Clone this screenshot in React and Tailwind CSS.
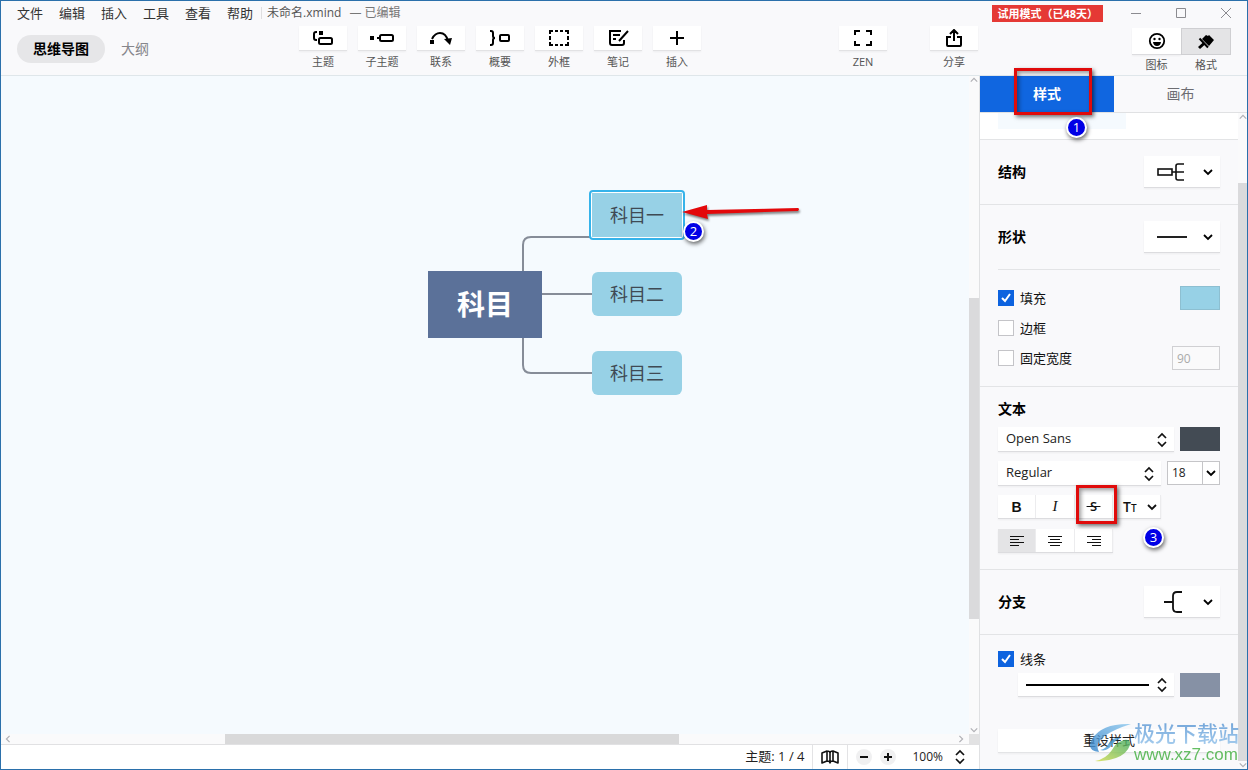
import { useState } from 'react';
import clsx from 'clsx';

const FONT = "font-['Open_Sans','Noto_Sans_CJK_SC',sans-serif]";
const MENUS = ['文件', '编辑', '插入', '工具', '查看', '帮助'];

function Glyph({ children }) {
  return (
    <svg width="24" height="16" viewBox="0 0 24 16" fill="none" stroke="#000" strokeWidth="2" aria-hidden="true">
      {children}
    </svg>
  );
}

const TOOLS = [
  {
    label: '主题',
    icon: (
      <Glyph>
        <path d="M6 2H5Q3 2 3 4v4q0 2 2 2h1" />
        <rect x="8" y="1" width="4" height="4" fill="#000" stroke="none" />
        <rect x="8" y="8" width="13" height="6" rx="1.5" />
      </Glyph>
    ),
  },
  {
    label: '子主题',
    icon: (
      <Glyph>
        <rect x="0" y="6" width="4" height="4" fill="#000" stroke="none" />
        <path d="M7 8h3" />
        <rect x="10" y="5" width="13" height="6" rx="1.5" />
      </Glyph>
    ),
  },
  {
    label: '联系',
    icon: (
      <Glyph>
        <rect x="1" y="10" width="4" height="4" fill="#000" stroke="none" />
        <path d="M3 9Q6 3 11 3q6 0 8 8" />
        <path d="M15 9l8-1-2 7z" fill="#000" stroke="none" />
      </Glyph>
    ),
  },
  {
    label: '概要',
    icon: (
      <Glyph>
        <path d="M2 1h1q2 0 2 2v3q0 2 2 2q-2 0-2 2v3q0 2-2 2H2" />
        <rect x="12" y="5" width="9" height="6" rx="1" />
      </Glyph>
    ),
  },
  {
    label: '外框',
    icon: (
      <Glyph>
        <path d="M3 4V1h3M18 1h3v3M21 12v3h-3M6 15H3v-3M8 1h3M13 1h3M8 15h3M13 15h3M3 6v4M21 6v4" />
      </Glyph>
    ),
  },
  {
    label: '笔记',
    icon: (
      <Glyph>
        <path d="M15 1H4v12q0 2 2 2h10q2 0 2-2v-3M7 5h7M7 9h3M22 1l-9 10" />
      </Glyph>
    ),
  },
  {
    label: '插入',
    icon: (
      <Glyph>
        <path d="M12 1v14M5 8h14" />
      </Glyph>
    ),
  },
];

function ToolButton({ label, children }) {
  return (
    <button type="button" className="flex w-12 flex-col items-center">
      <span className="flex h-[25px] w-full items-center justify-center border-b border-[#e2e2e4] bg-white shadow-xs">
        {children}
      </span>
      <span className="mt-[3px] text-[11px] leading-4 whitespace-nowrap text-[#555]">{label}</span>
    </button>
  );
}

function Chevron({ dir = 'down', thin, className }) {
  const d = {
    down: 'M1 3l4 4 4-4',
    up: 'M1 7l4-4 4 4',
    left: 'M7 1L3 5l4 4',
    right: 'M3 1l4 4-4 4',
  }[dir];
  return (
    <svg
      width={thin ? 8 : 10}
      height={thin ? 8 : 10}
      viewBox="0 0 10 10"
      fill="none"
      stroke="currentColor"
      strokeWidth={thin ? 1.5 : 1.8}
      className={clsx('shrink-0', className)}
      aria-hidden="true"
    >
      <path d={d} />
    </svg>
  );
}

function UpDown({ className }) {
  return (
    <svg width="10" height="16" viewBox="0 0 10 16" fill="none" stroke="#111" strokeWidth="1.7" className={className} aria-hidden="true">
      <path d="M1 6l4-4 4 4M1 10l4 4 4-4" />
    </svg>
  );
}

function Marker({ n, className }) {
  return (
    <span
      className={clsx(
        'pointer-events-none absolute z-20 flex size-[21px] items-center justify-center rounded-full border-2 border-white bg-[#0000e6] text-[13px] leading-none text-white shadow-[1px_2px_4px_rgba(0,0,0,0.6)]',
        className
      )}
    >
      {n}
    </span>
  );
}

function Highlight({ className }) {
  return (
    <span
      className={clsx(
        'pointer-events-none absolute z-10 border-[3px] border-[#e00b0b] shadow-[2px_2px_4px_rgba(0,0,0,0.55),inset_2px_2px_4px_rgba(0,0,0,0.4)]',
        className
      )}
    />
  );
}

function PickerRow({ title, inset, children }) {
  return (
    <div className={clsx('flex h-[65px] items-center justify-between border-b border-[#e3e4e6]', inset ? 'mx-[18px]' : 'px-[18px]')}>
      <h3 className="text-sm font-semibold text-black">{title}</h3>
      <button type="button" aria-label={title} className="flex h-8 w-19 items-center justify-between border-b border-[#dcdcdf] bg-white pr-[7px] pl-3 shadow-xs">
        {children}
        <Chevron />
      </button>
    </div>
  );
}

function Check({ label, checked, onChange }) {
  return (
    <label className="flex items-center gap-1.5 text-[13px] leading-4 text-[#111]">
      <span className="grid size-4 place-items-center">
        <input
          type="checkbox"
          checked={checked}
          onChange={onChange}
          className="col-start-1 row-start-1 size-4 appearance-none border border-[#c4c4c8] bg-white checked:border-[#0d63df] checked:bg-[#0d63df]"
        />
        {checked && (
          <svg width="10" height="10" viewBox="0 0 10 10" fill="none" stroke="#fff" strokeWidth="2" className="pointer-events-none col-start-1 row-start-1">
            <path d="M1 5l3 3 5-7" />
          </svg>
        )}
      </span>
      {label}
    </label>
  );
}

function SelectBox({ label, value }) {
  return (
    <div className="grid h-6 flex-1 items-center">
      <select aria-label={label} defaultValue={value} className="col-start-1 row-start-1 h-[25px] w-full appearance-none border-b border-[#dcdcdf] bg-white px-2 text-[13px] text-[#222] shadow-xs">
        <option>{value}</option>
      </select>
      <UpDown className="pointer-events-none col-start-1 row-start-1 mr-[7px] justify-self-end" />
    </div>
  );
}

function Header() {
  return (
    <header className="border-b border-[#dfe6ea]">
      <div className="flex h-6 items-center">
        <nav className="flex gap-4 pl-4 text-[13px] text-[#333]">
          {MENUS.map((m) => (
            <button key={m} type="button" className="leading-4">
              {m}
            </button>
          ))}
        </nav>
        <div className="ml-2 flex gap-2 border-l border-[#dedee0] pl-[5px] text-xs leading-3 text-[#555]">
          <span>未命名.xmind</span>
          <span className="text-[#777]">— 已编辑</span>
        </div>
        <span className="ml-auto bg-[#e53935] px-[5px] text-[11px] leading-[17px] font-bold text-white">试用模式（已48天）</span>
        <div className="flex gap-[35px] pr-4 pl-7 text-[#8b8b90]">
          <button type="button" aria-label="最小化">
            <svg width="10" height="10" fill="none" stroke="currentColor"><path d="M0 5.5h10" /></svg>
          </button>
          <button type="button" aria-label="最大化">
            <svg width="10" height="10" fill="none" stroke="currentColor"><path d="M.5.5h9v9h-9z" /></svg>
          </button>
          <button type="button" aria-label="关闭">
            <svg width="10" height="10" fill="none" stroke="currentColor"><path d="M0 0l10 10M10 0L0 10" /></svg>
          </button>
        </div>
      </div>

      <div className="flex h-[50px] items-start">
        <div className="flex w-[298px] items-center gap-4 pt-2.5 pl-4">
          <button type="button" className="h-7 rounded-full bg-[#e6e6e8] px-4 text-sm font-bold text-black">
            思维导图
          </button>
          <button type="button" className="text-sm text-[#86868b]">大纲</button>
        </div>
        <div className="flex gap-[11px] pt-px">
          {TOOLS.map((t) => (
            <ToolButton key={t.label} label={t.label}>
              {t.icon}
            </ToolButton>
          ))}
        </div>
        <div className="ml-auto flex gap-[43px] pt-px">
          <ToolButton label="ZEN">
            <svg width="20" height="18" viewBox="0 0 20 18" fill="none" stroke="#000" strokeWidth="2">
              <path d="M2 6V2h5M13 2h5v4M18 12v4h-5M7 16H2v-4" />
            </svg>
          </ToolButton>
          <ToolButton label="分享">
            <svg width="18" height="18" viewBox="0 0 18 18" fill="none" stroke="#000" strokeWidth="2">
              <path d="M6 8H2v8q0 1 1 1h12q1 0 1-1V8h-4M9 12V2M5 5l4-4 4 4" />
            </svg>
          </ToolButton>
        </div>
        <div className="mr-4 ml-[154px] flex pt-[3px] text-[11px] leading-4 text-[#555]">
          <button type="button" className="flex w-[49px] flex-col items-center">
            <span className="flex h-[27px] w-full items-center justify-center border-b border-[#dcdcdf] bg-white shadow-xs">
              <svg width="18" height="18" viewBox="0 0 18 18" fill="none" stroke="#000" strokeWidth="1.8">
                <circle cx="9" cy="9" r="7.2" />
                <path d="M5 10h8q-.5 4-4 4t-4-4z" fill="#000" stroke="none" />
                <circle cx="6.500" cy="7" r="1.200" fill="#000" stroke="none" />
                <circle cx="11.500" cy="7" r="1.200" fill="#000" stroke="none" />
              </svg>
            </span>
            <span className="mt-0.5">图标</span>
          </button>
          <button type="button" className="flex w-[50px] flex-col items-center">
            <span className="flex h-[27px] w-full items-center justify-center border border-[#cfcfd2] bg-[#e4e4e6]">
              <svg width="18" height="18" viewBox="0 0 18 18" fill="none" stroke="#000">
                <path d="M9 2l2 1 1-1 5 5-5 6-7-7z" fill="#000" stroke="none" />
                <path d="M2.500 5.500l8.500 9" strokeWidth="2" />
                <path d="M7 10.500l-5 4.500" strokeWidth="3" />
              </svg>
            </span>
            <span className="mt-0.5">格式</span>
          </button>
        </div>
      </div>
    </header>
  );
}

function Canvas() {
  return (
    <div className="relative min-w-0 flex-1 overflow-hidden bg-[#f5fafe] text-lg text-[#3f4a54]">
      <svg className="absolute inset-0 size-full" fill="none" stroke="#868c98" strokeWidth="2">
        <path d="M522 196v-27q0-8 8-8h62M541 218h51M522 262v27q0 8 8 8h62" />
      </svg>
      <div className="absolute top-[195px] left-[427px] flex h-[67px] w-[114px] items-center justify-center bg-[#5b7199] text-[28px] font-bold text-white">
        科目
      </div>
      <div className="absolute top-[114px] left-[588px] h-[50px] w-24 rounded-sm border-2 border-[#36b3ea] bg-white p-px">
        <div className="flex size-full items-center justify-center bg-[#97d1e6]">科目一</div>
      </div>
      <div className="absolute top-[196px] left-[591px] flex h-11 w-[90px] items-center justify-center rounded-md bg-[#97d1e6]">科目二</div>
      <div className="absolute top-[275px] left-[591px] flex h-11 w-[90px] items-center justify-center rounded-md bg-[#97d1e6]">科目三</div>
      <svg width="126" height="24" viewBox="0 0 126 24" className="absolute top-[124px] left-[679px] drop-shadow-[1px_2px_1px_rgba(0,0,0,0.5)]">
        <path d="M2 12L27 5v5l91-2q2 1 0 3l-91 3 1 5z" fill="#e3080b" />
      </svg>
      <Marker n={2} className="top-[145px] left-[682px]" />
    </div>
  );
}

function StatusBar() {
  return (
    <footer className="flex h-[25px] items-center justify-end border-t border-[#e1e1e3] bg-white text-xs text-[#222]">
      <span className="pr-2 text-[13px]">主题: 1 / 4</span>
      <button type="button" aria-label="导航" className="flex h-full w-9 items-center justify-center border-x border-[#e3e3e5]">
        <svg width="18" height="16" viewBox="0 0 18 16" fill="none" stroke="#111" strokeWidth="1.6" strokeLinejoin="round">
          <path d="M1 4l5-2v10l-5 2zM6 2q3 0 3 2v10q0-2-3-2M9 4q0-2 3-2v10q-3 0-3 2M12 2l5 2v10l-5-2" />
        </svg>
      </button>
      <div className="flex items-center gap-2 pl-2">
        <button type="button" aria-label="缩小" className="flex size-4 items-center justify-center rounded-full bg-[#f0f0f1]">
          <svg width="10" height="10" stroke="#111" strokeWidth="2"><path d="M1 5h8" /></svg>
        </button>
        <button type="button" aria-label="放大" className="flex size-4 items-center justify-center rounded-full bg-[#f0f0f1]">
          <svg width="10" height="10" stroke="#111" strokeWidth="2"><path d="M1 5h8M5 1v8" /></svg>
        </button>
      </div>
      <button type="button" className="flex items-center gap-3 pr-3.5 pl-4">
        100%
        <UpDown />
      </button>
    </footer>
  );
}

function Watermark() {
  return (
    <div className="pointer-events-none absolute right-2 bottom-1 z-10 flex items-center opacity-80">
      <svg width="46" height="42" viewBox="0 0 46 42" aria-hidden="true">
        <defs>
          <linearGradient id="wave" x1="0" y1="1" x2="1" y2="0">
            <stop offset="0" stopColor="#2f80c8" />
            <stop offset="1" stopColor="#8cc8ee" />
          </linearGradient>
          <linearGradient id="leaf" x1="0" y1="1" x2="1" y2="0">
            <stop offset="0" stopColor="#d3dd4a" />
            <stop offset="1" stopColor="#3faa62" />
          </linearGradient>
        </defs>
        <path d="M43 2Q14 1 4 17q-6 12 7 13-5-9 7-17Q27 7 43 2z" fill="url(#wave)" />
        <path d="M7 39q11-2 17-11 4-8 12-10 7-1 6 5-3 9-14 13-10 4-21 3z" fill="url(#leaf)" />
        <path d="M12 28q6-1 9-7 4-6 12-5-6 2-9 7-5 7-12 5z" fill="#4b9bd5" />
      </svg>
      <div>
        <div className="bg-linear-to-b from-[#4f8fd0] to-[#8fc0ea] bg-clip-text text-[21px] leading-6 font-medium text-transparent">极光下载站</div>
        <div className="font-['Liberation_Sans',sans-serif] text-[17px] leading-5 text-[#3fae3c]">www.xz7.com</div>
      </div>
    </div>
  );
}

function StylePanel() {
  const [checks, setChecks] = useState({ fill: true, border: false, fixed: false, line: true });
  const toggle = (key) => () => setChecks((p) => ({ ...p, [key]: !p[key] }));

  return (
    <div className="min-w-0 flex-1">
      <div className="h-[27px] border-b border-[#e3e4e6] bg-white pl-[18px]">
        <div className="h-4 w-32 bg-[#f5fafe]" />
      </div>

      <PickerRow title="结构">
        <svg width="30" height="20" viewBox="0 0 30 20" fill="none" stroke="#111" strokeWidth="1.6">
          <rect x="2" y="7" width="14" height="6" />
          <path d="M16 10h12M28 2h-6q-2 0-2 2v12q0 2 2 2h6" />
        </svg>
      </PickerRow>
      <PickerRow title="形状" inset>
        <svg width="32" height="10" stroke="#222" strokeWidth="2"><path d="M1 5h30" /></svg>
      </PickerRow>

      <div className="flex flex-col gap-1.5 border-b border-[#e3e4e6] px-[18px] py-4">
        <div className="flex h-6 items-center justify-between">
          <Check label="填充" checked={checks.fill} onChange={toggle('fill')} />
          <button type="button" aria-label="填充颜色" className="h-6 w-10 border border-[#8dbfd1] bg-[#97d1e6]" />
        </div>
        <div className="flex h-6 items-center">
          <Check label="边框" checked={checks.border} onChange={toggle('border')} />
        </div>
        <div className="flex h-6 items-center justify-between">
          <Check label="固定宽度" checked={checks.fixed} onChange={toggle('fixed')} />
          <input aria-label="宽度" disabled defaultValue="90" className="h-6 w-12 border border-[#d0d0d3] bg-[#fafafb] px-1 text-xs text-[#aaa]" />
        </div>
      </div>

      <div className="flex flex-col gap-2.5 border-b border-[#e3e4e6] px-[18px] pt-3 pb-4">
        <h3 className="-mb-0.5 text-sm leading-5 font-semibold text-black">文本</h3>
        <div className="flex gap-1.5">
          <SelectBox label="字体" value="Open Sans" />
          <button type="button" aria-label="文字颜色" className="h-6 w-10 bg-[#434b54]" />
        </div>
        <div className="flex gap-1.5">
          <SelectBox label="字重" value="Regular" />
          <div className="flex h-6 w-[53px] border border-[#c5c5c8] bg-white">
            <input aria-label="字号" defaultValue="18" className="w-[35px] border-r border-[#c5c5c8] pl-1 text-xs text-[#222]" />
            <button type="button" aria-label="选择字号" className="flex flex-1 items-center justify-center">
              <Chevron />
            </button>
          </div>
        </div>
        <div className="relative flex h-6 w-[163px] divide-x divide-[#ececee] border-b border-[#dcdcdf] bg-white text-[13px] text-[#111] shadow-xs">
          <button type="button" className="w-[38px] font-['Liberation_Sans',sans-serif] text-sm font-bold">B</button>
          <button type="button" className="w-[39px] font-['Liberation_Serif',serif] text-[15px] italic">I</button>
          <button type="button" className="w-[38px] font-semibold">
            <span className="whitespace-pre line-through decoration-1">{' S '}</span>
          </button>
          <button type="button" className="flex flex-1 items-center justify-between pr-[3px] pl-2.5 text-sm font-semibold">
            <span>
              T<span className="text-[10px]">T</span>
            </span>
            <Chevron />
          </button>
          <Highlight className="-top-2.5 left-[78px] h-[39px] w-[41px]" />
        </div>
        <div className="relative flex h-6 w-[115px] divide-x divide-[#ececee] border-b border-[#dcdcdf] bg-white shadow-xs">
          <button type="button" aria-label="左对齐" className="flex w-[38px] items-center justify-center bg-[#e4e4e6]">
            <svg width="16" height="12" stroke="#111"><path d="M1 1.500h14M1 4.500h9M1 7.500h14M1 10.500h9" /></svg>
          </button>
          <button type="button" aria-label="居中" className="flex w-[39px] items-center justify-center">
            <svg width="16" height="12" stroke="#111"><path d="M1 1.500h14M3 4.500h10M1 7.500h14M3 10.500h10" /></svg>
          </button>
          <button type="button" aria-label="右对齐" className="flex w-[38px] items-center justify-center">
            <svg width="16" height="12" stroke="#111"><path d="M1 1.500h14M6 4.500h9M1 7.500h14M6 10.500h9" /></svg>
          </button>
          <Marker n={3} className="-top-0.5 left-[145px]" />
        </div>
      </div>

      <PickerRow title="分支">
        <svg width="32" height="24" viewBox="0 0 32 24" fill="none" stroke="#111" strokeWidth="1.8">
          <path d="M8 12h9M26 2h-5q-4 0-4 4v12q0 4 4 4h5" />
        </svg>
      </PickerRow>

      <div className="px-[18px] py-4">
        <Check label="线条" checked={checks.line} onChange={toggle('line')} />
        <div className="mt-1.5 flex gap-1.5 pl-5">
          <button type="button" aria-label="线条样式" className="flex h-6 flex-1 items-center gap-2 border-b border-[#dcdcdf] bg-white pr-[7px] pl-2 shadow-xs">
            <span className="h-0.5 flex-1 bg-black" />
            <UpDown />
          </button>
          <button type="button" aria-label="线条颜色" className="h-6 w-10 bg-[#8691a5]" />
        </div>
        <button type="button" className="mt-8 h-6 w-full border-b border-[#e3e4e6] bg-white text-[13px] text-[#222] shadow-xs">
          重设样式
        </button>
      </div>
    </div>
  );
}

export default function App() {
  return (
    <div className={clsx('flex min-h-screen flex-col border border-[#2b70ab] bg-[#f9f9fb]', FONT)}>
      <Header />
      <div className="flex flex-1">
        <main className="flex min-w-0 flex-1 flex-col">
          <div className="flex flex-1">
            <Canvas />
            <div className="flex w-2.5 flex-col items-center bg-[#fafafb] text-[#b0b0b5]">
              <Chevron dir="up" thin />
              <div className="flex w-full flex-1 flex-col">
                <div className="flex-[2]" />
                <div className="flex-[3] bg-[#dadadc]" />
                <div className="flex-[1]" />
              </div>
              <Chevron thin />
            </div>
          </div>
          <div className="flex h-2.5 items-center bg-[#fafafb] text-[#b0b0b5]">
            <Chevron dir="left" thin className="ml-[3px]" />
            <div className="ml-[213px] h-full flex-1 bg-[#d9d9da]" />
            <Chevron dir="right" thin className="ml-[278px]" />
            <div className="ml-1 h-full w-2.5 bg-[#e2e2e3]" />
          </div>
          <StatusBar />
        </main>

        <aside className="relative flex w-[268px] flex-col border-l border-[#e0e1e3]">
          <div role="tablist" className="flex h-[37px] border-b border-[#e0e1e3] text-sm">
            <button type="button" role="tab" aria-selected="true" className="w-[134px] bg-[#1066e0] font-semibold text-white">
              样式
            </button>
            <button type="button" role="tab" aria-selected="false" className="flex-1 text-[#6d6d72]">
              画布
            </button>
          </div>
          <div className="flex flex-1">
            <StylePanel />
            <div className="flex w-[9px] flex-col items-center bg-[#fafafb] text-[#b0b0b5]">
              <Chevron dir="up" thin />
              <div className="mt-[62px] w-full flex-1 bg-[#dadadc]" />
              <Chevron thin />
            </div>
          </div>
          <Highlight className="-top-2 left-[34px] h-[47px] w-[78px]" />
          <Marker n={1} className="top-[41px] left-[86px]" />
          <Watermark />
        </aside>
      </div>
    </div>
  );
}
